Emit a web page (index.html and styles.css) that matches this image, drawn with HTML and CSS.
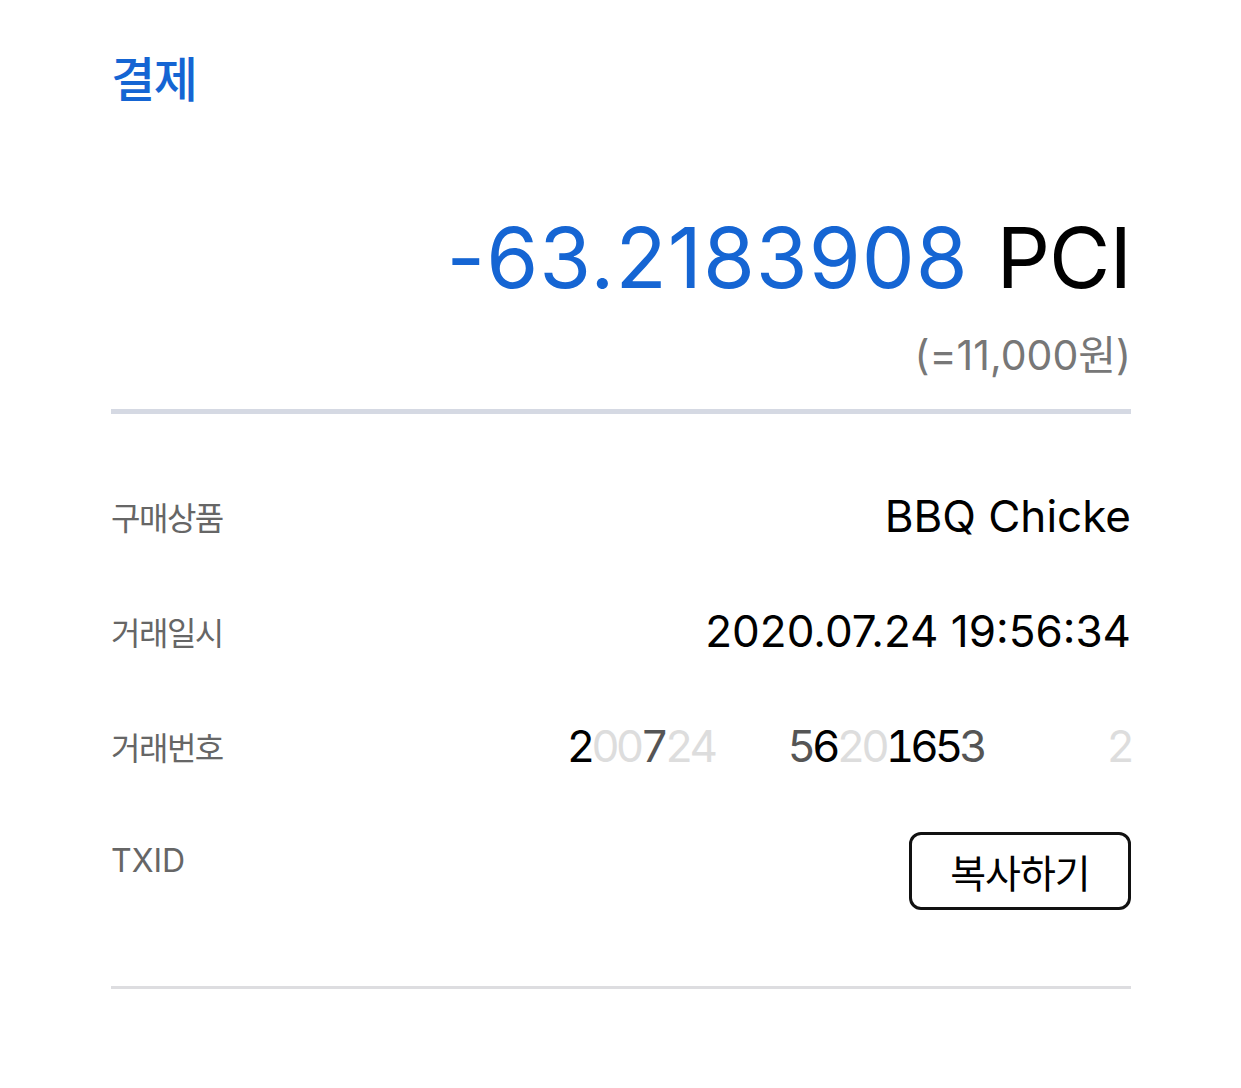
FILE: index.html
```html
<!DOCTYPE html>
<html lang="ko">
  <head>
    <meta charset="UTF-8" />
    <meta name="viewport" content="width=device-width, initial-scale=1.0" />
    <title>결제</title>
    <link rel="stylesheet" href="styles.css">
  </head>
  <body>
    <main class="receipt">
      <h1 class="title">결제</h1>

      <section class="amount">
        <div class="amount-main">
          <span class="amount-value">-63.2183908</span>
          <span class="amount-unit">PCI</span>
        </div>
        <div class="amount-krw">(=11,000원)</div>
      </section>

      <hr class="divider-thick" />

      <dl class="details">
        <div class="row">
          <dt>구매상품</dt>
          <dd>BBQ Chicke</dd>
        </div>
        <div class="row">
          <dt>거래일시</dt>
          <dd>2020.07.24 19:56:34</dd>
        </div>
        <div class="row">
          <dt>거래번호</dt>
          <dd class="masked"><span class="d0">2</span><span class="d2">0</span><span class="d2">0</span><span class="d1">7</span><span class="d2">2</span><span class="d2">4</span><span class="d3">1</span><span class="d3">9</span><span class="d3">5</span><span class="d1">5</span><span class="d0">6</span><span class="d2">2</span><span class="d2">0</span><span class="d0">1</span><span class="d0">6</span><span class="d0">5</span><span class="d1">3</span><span class="d3">3</span><span class="d3">0</span><span class="d3">0</span><span class="d3">0</span><span class="d3">1</span><span class="d2">2</span></dd>
        </div>
        <div class="row row-txid">
          <dt>TXID</dt>
          <dd><button type="button" class="copy-btn">복사하기</button></dd>
        </div>
      </dl>

      <hr class="divider-thin" />
    </main>
  </body>
</html>
```

FILE: styles.css
```css
body {
  margin: 0;
  padding: 0;
  background: #fff;
  color: #000;
  font-family: "Inter", "Noto Sans CJK KR", sans-serif;
}
.receipt {
  width: 1020px;
  margin-left: 111px;
  padding-top: 46px;
}
.title {
  margin: 0;
  font-family: "Noto Sans CJK KR", sans-serif;
  font-size: 48px;
  font-weight: 500;
  letter-spacing: -1.5px;
  line-height: 60px;
  color: #1565d3;
}
.amount {
  text-align: right;
  padding-top: 102px;
}
.amount-main {
  font-size: 84px;
  line-height: 100px;
}
.amount-value {
  color: #1565d3;
  letter-spacing: 1px;
  margin-right: 4px;
}
.amount-unit {
  color: #000;
  letter-spacing: -1px;
}
.amount-krw {
  margin-top: 23px;
  font-size: 41px;
  line-height: 48px;
  color: #777;
}
.divider-thick {
  margin: 30px 0 0;
  border: none;
  height: 5px;
  background: #d5d9e3;
}
.details {
  margin: 77px 0 0;
}
.row {
  display: flex;
  justify-content: space-between;
  align-items: flex-start;
  height: 115px;
}
.row dt {
  font-family: "Noto Sans CJK KR", sans-serif;
  font-size: 32px;
  letter-spacing: -1.5px;
  line-height: 50px;
  color: #666;
}
.row dd {
  margin: 0;
  font-size: 44px;
  line-height: 50px;
  color: #000;
}
.row-txid dt {
  font-family: "Inter", sans-serif;
  letter-spacing: 0;
}
.masked {
  font-variant-numeric: tabular-nums;
  letter-spacing: -4px;
}
.masked span.d1 { color: #555; }
.masked span.d2 { color: #ddd; }
.masked span.d3 { color: #fff; }
.copy-btn {
  margin-top: -4px;
  width: 222px;
  height: 78px;
  background: #fff;
  border: 3px solid #111;
  border-radius: 12px;
  font-family: "Noto Sans CJK KR", sans-serif;
  font-size: 39px;
  letter-spacing: -1px;
  color: #000;
  cursor: pointer;
}
.divider-thin {
  margin: 35px 0 0;
  border: none;
  height: 3px;
  background: #dddde0;
}
```
